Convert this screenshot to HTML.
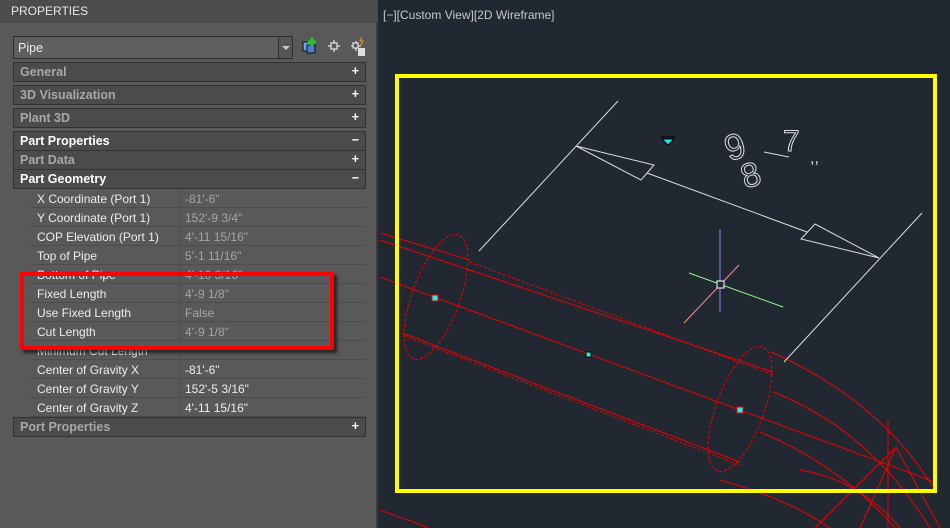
<!DOCTYPE html>
<html><head><style>
*{margin:0;padding:0;box-sizing:border-box}
body{width:950px;height:528px;overflow:hidden;background:#222831;font-family:"Liberation Sans",sans-serif;position:relative}
#panel{position:absolute;left:0;top:0;width:378px;height:528px;background:#595959;border-right:2px solid #3a3a3a}
#hdr{position:absolute;left:0;top:0;width:378px;height:23px;background:#4c4c4c;color:#e8e8e8;font-size:12px;padding:4px 11px}
.combo{position:absolute;left:13px;top:36px;width:280px;height:23px;background:#5f5f5f;border:1px solid #2e2e2e;color:#eee;font-size:12.5px;padding:4px 4px}
.combo .dd{position:absolute;right:0;top:0;width:14px;height:21px;border-left:1px solid #2e2e2e;background:#555}
.combo .dd:after{content:"";position:absolute;left:3px;top:9px;border:4px solid transparent;border-top:4px solid #ccc}
.sec{position:absolute;left:13px;width:353px;height:20px;background:#4b4b4b;border:1px solid #333;color:#a8a8a8;font-weight:bold;font-size:12.5px;padding:2px 6px}
.sec.on{color:#fff}
.sec span{position:absolute;right:6px;top:1px;color:#fff}
.row{position:absolute;left:30px;width:336px;height:19px;border-bottom:1px solid #4d4d4d;font-size:12px;color:#eee}
.row .l{position:absolute;left:7px;top:3px}
.row .v{position:absolute;left:150px;top:0;height:19px;border-left:1px solid #4d4d4d;padding:3px 4px;width:186px}
.g{color:#a5a5a5}
#rb{position:absolute;left:20px;top:272px;width:314px;height:78px;border:4px solid #f00;box-shadow:3px 3px 3px rgba(0,0,0,.6)}
#vt{position:absolute;left:383px;top:8px;color:#c8c8c8;font-size:12px}
</style></head><body>
<div id="panel">
<div id="hdr">PROPERTIES</div>
<div class="combo">Pipe<div class="dd"></div></div>
<svg style="position:absolute;left:300px;top:36px" width="70" height="22">
<rect x="3" y="6" width="9" height="9" fill="#6fa0e0" stroke="#111"/><rect x="7" y="9" width="8" height="8" fill="#4a7fc8" stroke="#111"/><path d="M12 2v8M8 6h8" stroke="#2c2" stroke-width="3"/>
<path d="M28 10h12M34 4v12" stroke="#fff"/><rect x="31" y="7" width="6" height="6" fill="#595959" stroke="#fff"/>
<path d="M51 10h10M56 5v10" stroke="#fff"/><rect x="53" y="7" width="5" height="5" fill="#595959" stroke="#fff"/><rect x="58" y="12" width="7" height="8" fill="#ddd"/><path d="M62 1l-2 4h3l-2 4" stroke="#f90" fill="none"/>
</svg>
<div class="sec" style="top:62px">General<span>+</span></div>
<div class="sec" style="top:85px">3D Visualization<span>+</span></div>
<div class="sec" style="top:108px">Plant 3D<span>+</span></div>
<div class="sec on" style="top:131px">Part Properties<span>−</span></div>
<div class="sec" style="top:150px">Part Data<span>+</span></div>
<div class="sec on" style="top:169px">Part Geometry<span>−</span></div>
<div class="row" style="top:189px"><span class="l">X Coordinate (Port 1)</span><span class="v g">-81'-6"</span></div>
<div class="row" style="top:208px"><span class="l">Y Coordinate (Port 1)</span><span class="v g">152'-9 3/4"</span></div>
<div class="row" style="top:227px"><span class="l">COP Elevation (Port 1)</span><span class="v g">4'-11 15/16"</span></div>
<div class="row" style="top:246px"><span class="l">Top of Pipe</span><span class="v g">5'-1 11/16"</span></div>
<div class="row" style="top:265px"><span class="l">Bottom of Pipe</span><span class="v g">4'-10 3/16"</span></div>
<div class="row" style="top:284px"><span class="l">Fixed Length</span><span class="v g">4'-9 1/8"</span></div>
<div class="row" style="top:303px"><span class="l">Use Fixed Length</span><span class="v g">False</span></div>
<div class="row" style="top:322px"><span class="l">Cut Length</span><span class="v g">4'-9 1/8"</span></div>
<div class="row" style="top:341px"><span class="l">Minimum Cut Length</span><span class="v g"></span></div>
<div class="row" style="top:360px"><span class="l">Center of Gravity X</span><span class="v">-81'-6"</span></div>
<div class="row" style="top:379px"><span class="l">Center of Gravity Y</span><span class="v">152'-5 3/16"</span></div>
<div class="row" style="top:398px"><span class="l">Center of Gravity Z</span><span class="v">4'-11 15/16"</span></div>
<div class="sec" style="top:417px">Port Properties<span>+</span></div>
<div id="rb"></div>
</div>
<div id="vt">[−][Custom View][2D Wireframe]</div>
<svg style="position:absolute;left:0;top:0" width="950" height="528">
<g stroke="#e00" fill="none" stroke-width="1">
<path d="M380 233L470 260M380 240L773 372M380 277L932 481M402 333L740 462M380 510L427 527"/>
<path d="M771 352Q880 400 935 490M773 392Q870 430 930 528M760 432Q840 465 895 528M720 480Q790 500 830 528M888 420V528M896 447L815 528M896 447L860 528M896 447L940 528M800 470Q860 480 900 528"/>
<ellipse cx="436" cy="297" rx="24" ry="66" transform="rotate(20 436 297)" stroke-dasharray="3 2"/>
<ellipse cx="740" cy="409" rx="24" ry="66" transform="rotate(20 740 409)" stroke-dasharray="3 2"/>
<path d="M470 262L773 375M404 336L742 466" stroke-dasharray="3 2"/>
</g>
<g stroke="#ddd" fill="none" stroke-width="1">
<path d="M618 101L479 251M922 213L784 362M647 173L807 232"/>
<path d="M576 146L654 165L641 180Z M879 258L815 224L801 239Z"/>
<path d="M764 152L789 157"/>
</g>
<text x="724" y="156" fill="none" stroke="#ddd" stroke-width="1" font-size="36" transform="rotate(-18 744 142)" font-family="Liberation Sans">9</text>
<text x="740" y="184" fill="none" stroke="#ddd" stroke-width="1" font-size="34" transform="rotate(-18 758 170)" font-family="Liberation Sans">8</text>
<text x="783" y="151" fill="none" stroke="#ddd" stroke-width="1" font-size="30" font-family="Liberation Sans">7</text>
<text x="810" y="163" fill="#ddd" font-size="16">,,</text>
<path d="M661 137h14M662 139l6 6 6-6z" fill="#1ee" stroke="#000"/>
<path d="M720 229V312" stroke="#88f"/><path d="M689 273L783 307" stroke="#8f8"/><path d="M684 323L739 265" stroke="#f88"/>
<rect x="717" y="281" width="7" height="7" fill="#222831" stroke="#fff"/>
<rect x="432" y="295" width="6" height="6" fill="#2ee" stroke="#e00"/><rect x="586" y="352" width="5" height="5" fill="#2ee" stroke="#000"/><rect x="737" y="407" width="6" height="6" fill="#2ee" stroke="#e00"/>
<rect x="397" y="76" width="538" height="415" fill="none" stroke="#ff0" stroke-width="4"/>
</svg>
</body></html>
